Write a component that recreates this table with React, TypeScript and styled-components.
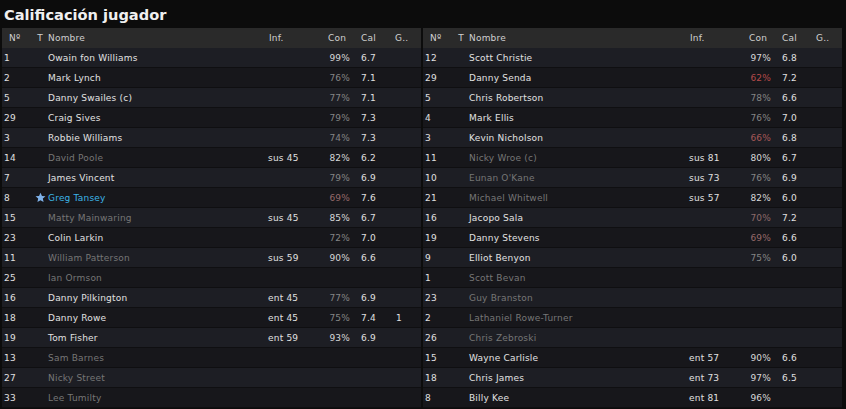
import React from "react";
import styled, { createGlobalStyle } from "styled-components";

type Player = {
  num: string;
  name: string;
  inf?: string;
  con?: number;
  cal?: string;
  g?: string;
  state?: "active" | "idle" | "star";
};

const LEFT: Player[] = [
  { num: "1", name: "Owain fon Williams", con: 99, cal: "6.7" },
  { num: "2", name: "Mark Lynch", con: 76, cal: "7.1" },
  { num: "5", name: "Danny Swailes (c)", con: 77, cal: "7.1" },
  { num: "29", name: "Craig Sives", con: 79, cal: "7.3" },
  { num: "3", name: "Robbie Williams", con: 74, cal: "7.3" },
  { num: "14", name: "David Poole", inf: "sus 45", con: 82, cal: "6.2", state: "idle" },
  { num: "7", name: "James Vincent", con: 79, cal: "6.9" },
  { num: "8", name: "Greg Tansey", con: 69, cal: "7.6", state: "star" },
  { num: "15", name: "Matty Mainwaring", inf: "sus 45", con: 85, cal: "6.7", state: "idle" },
  { num: "23", name: "Colin Larkin", con: 72, cal: "7.0" },
  { num: "11", name: "William Patterson", inf: "sus 59", con: 90, cal: "6.6", state: "idle" },
  { num: "25", name: "Ian Ormson", state: "idle" },
  { num: "16", name: "Danny Pilkington", inf: "ent 45", con: 77, cal: "6.9" },
  { num: "18", name: "Danny Rowe", inf: "ent 45", con: 75, cal: "7.4", g: "1" },
  { num: "19", name: "Tom Fisher", inf: "ent 59", con: 93, cal: "6.9" },
  { num: "13", name: "Sam Barnes", state: "idle" },
  { num: "27", name: "Nicky Street", state: "idle" },
  { num: "33", name: "Lee Tumilty", state: "idle" },
];

const RIGHT: Player[] = [
  { num: "12", name: "Scott Christie", con: 97, cal: "6.8" },
  { num: "29", name: "Danny Senda", con: 62, cal: "7.2" },
  { num: "5", name: "Chris Robertson", con: 78, cal: "6.6" },
  { num: "4", name: "Mark Ellis", con: 76, cal: "7.0" },
  { num: "3", name: "Kevin Nicholson", con: 66, cal: "6.8" },
  { num: "11", name: "Nicky Wroe (c)", inf: "sus 81", con: 80, cal: "6.7", state: "idle" },
  { num: "10", name: "Eunan O'Kane", inf: "sus 73", con: 76, cal: "6.9", state: "idle" },
  { num: "21", name: "Michael Whitwell", inf: "sus 57", con: 82, cal: "6.0", state: "idle" },
  { num: "16", name: "Jacopo Sala", con: 70, cal: "7.2" },
  { num: "19", name: "Danny Stevens", con: 69, cal: "6.6" },
  { num: "9", name: "Elliot Benyon", con: 75, cal: "6.0" },
  { num: "1", name: "Scott Bevan", state: "idle" },
  { num: "23", name: "Guy Branston", state: "idle" },
  { num: "2", name: "Lathaniel Rowe-Turner", state: "idle" },
  { num: "26", name: "Chris Zebroski", state: "idle" },
  { num: "15", name: "Wayne Carlisle", inf: "ent 57", con: 90, cal: "6.6" },
  { num: "18", name: "Chris James", inf: "ent 73", con: 97, cal: "6.5" },
  { num: "8", name: "Billy Kee", inf: "ent 81", con: 96 },
];

// condition colour: white when fit, grey in the 70s, reddish below
const conColor = (pct: number) => {
  if (pct >= 80) return "#d8d8d8";
  if (pct >= 71) return "#858585";
  if (pct >= 69) return pct === 70 ? "#8c6a6a" : "#966a6a";
  if (pct >= 65) return "#a65858";
  return "#b44a4a";
};

const nameColor = {
  active: "#e2e2e2",
  idle: "#767676",
  star: "#3cb4e6",
};

const GlobalStyle = createGlobalStyle`
  html, body {
    margin: 0;
    padding: 0;
    background: #0c0c0c;
  }
  body {
    font-family: "DejaVu Sans", Verdana, sans-serif;
  }
`;

const Screen = styled.div`
  width: 846px;
  height: 409px;
  background: #0c0c0c;
  overflow: hidden;
`;

const Title = styled.h1`
  margin: 0;
  height: 28px;
  padding: 0 0 0 4px;
  display: flex;
  align-items: center;
  font-size: 14.6px;
  font-weight: bold;
  color: #f0f0f0;
`;

const Tables = styled.div`
  display: flex;
  gap: 2px;
  padding-left: 2px;
`;

const Table = styled.div`
  width: 419px;
  display: flex;
  flex-direction: column;
`;

const Row = styled.div<{ $kind: "head" | "even" | "odd" }>`
  display: grid;
  grid-template-columns: 32px 12px 221px 59px 29px 36px 1fr;
  height: ${(p) => (p.$kind === "head" ? "20px" : "19px")};
  align-items: center;
  font-size: 9px;
  letter-spacing: 0.2px;
  background: ${(p) =>
    p.$kind === "head" ? "#2a2a2a" : p.$kind === "even" ? "#1d1e24" : "#17171b"};
  border-bottom: ${(p) => (p.$kind === "head" ? "none" : "1px solid #0f0f11")};
  color: ${(p) => (p.$kind === "head" ? "#d0d0d0" : "#e0e0e0")};
`;

const Cell = styled.div<{ $pad?: number; $align?: "left" | "right" | "center" }>`
  padding-left: ${(p) => p.$pad ?? 0}px;
  text-align: ${(p) => p.$align ?? "left"};
  white-space: nowrap;
  overflow: hidden;
`;

const Name = styled.div<{ $color: string }>`
  padding-left: 2px;
  color: ${(p) => p.$color};
  white-space: nowrap;
`;

const Con = styled.div<{ $color: string }>`
  text-align: right;
  padding-right: 5px;
  color: ${(p) => p.$color};
`;

const StarIcon = () => (
  <svg width="11" height="11" viewBox="0 0 24 24" style={{ display: "block", margin: "0 auto" }}>
    <path
      d="M12 1.5l3.2 7 7.6.8-5.7 5.1 1.6 7.5L12 18l-6.7 3.9 1.6-7.5-5.7-5.1 7.6-.8z"
      fill="#7fb2ea"
    />
  </svg>
);

const PlayerTable = ({ players }: { players: Player[] }) => (
  <Table>
    <Row $kind="head">
      <Cell $pad={7}>Nº</Cell>
      <Cell $align="center">T</Cell>
      <Cell $pad={2}>Nombre</Cell>
      <Cell $pad={2}>Inf.</Cell>
      <Cell $pad={2}>Con</Cell>
      <Cell $pad={6}>Cal</Cell>
      <Cell $pad={4}>G..</Cell>
    </Row>
    {players.map((p, i) => (
      <Row key={p.num + p.name} $kind={i % 2 === 0 ? "even" : "odd"}>
        <Cell $pad={2}>{p.num}</Cell>
        <Cell>{p.state === "star" ? <StarIcon /> : null}</Cell>
        <Name $color={nameColor[p.state ?? "active"]}>{p.name}</Name>
        <Cell $pad={1}>{p.inf ?? ""}</Cell>
        <Con $color={p.con !== undefined ? conColor(p.con) : "#e0e0e0"}>
          {p.con !== undefined ? `${p.con}%` : ""}
        </Con>
        <Cell $pad={6}>{p.cal ?? ""}</Cell>
        <Cell $pad={5}>{p.g ?? ""}</Cell>
      </Row>
    ))}
  </Table>
);

const App = () => (
  <Screen>
    <GlobalStyle />
    <Title>Calificación jugador</Title>
    <Tables>
      <PlayerTable players={LEFT} />
      <PlayerTable players={RIGHT} />
    </Tables>
  </Screen>
);

export default App;
